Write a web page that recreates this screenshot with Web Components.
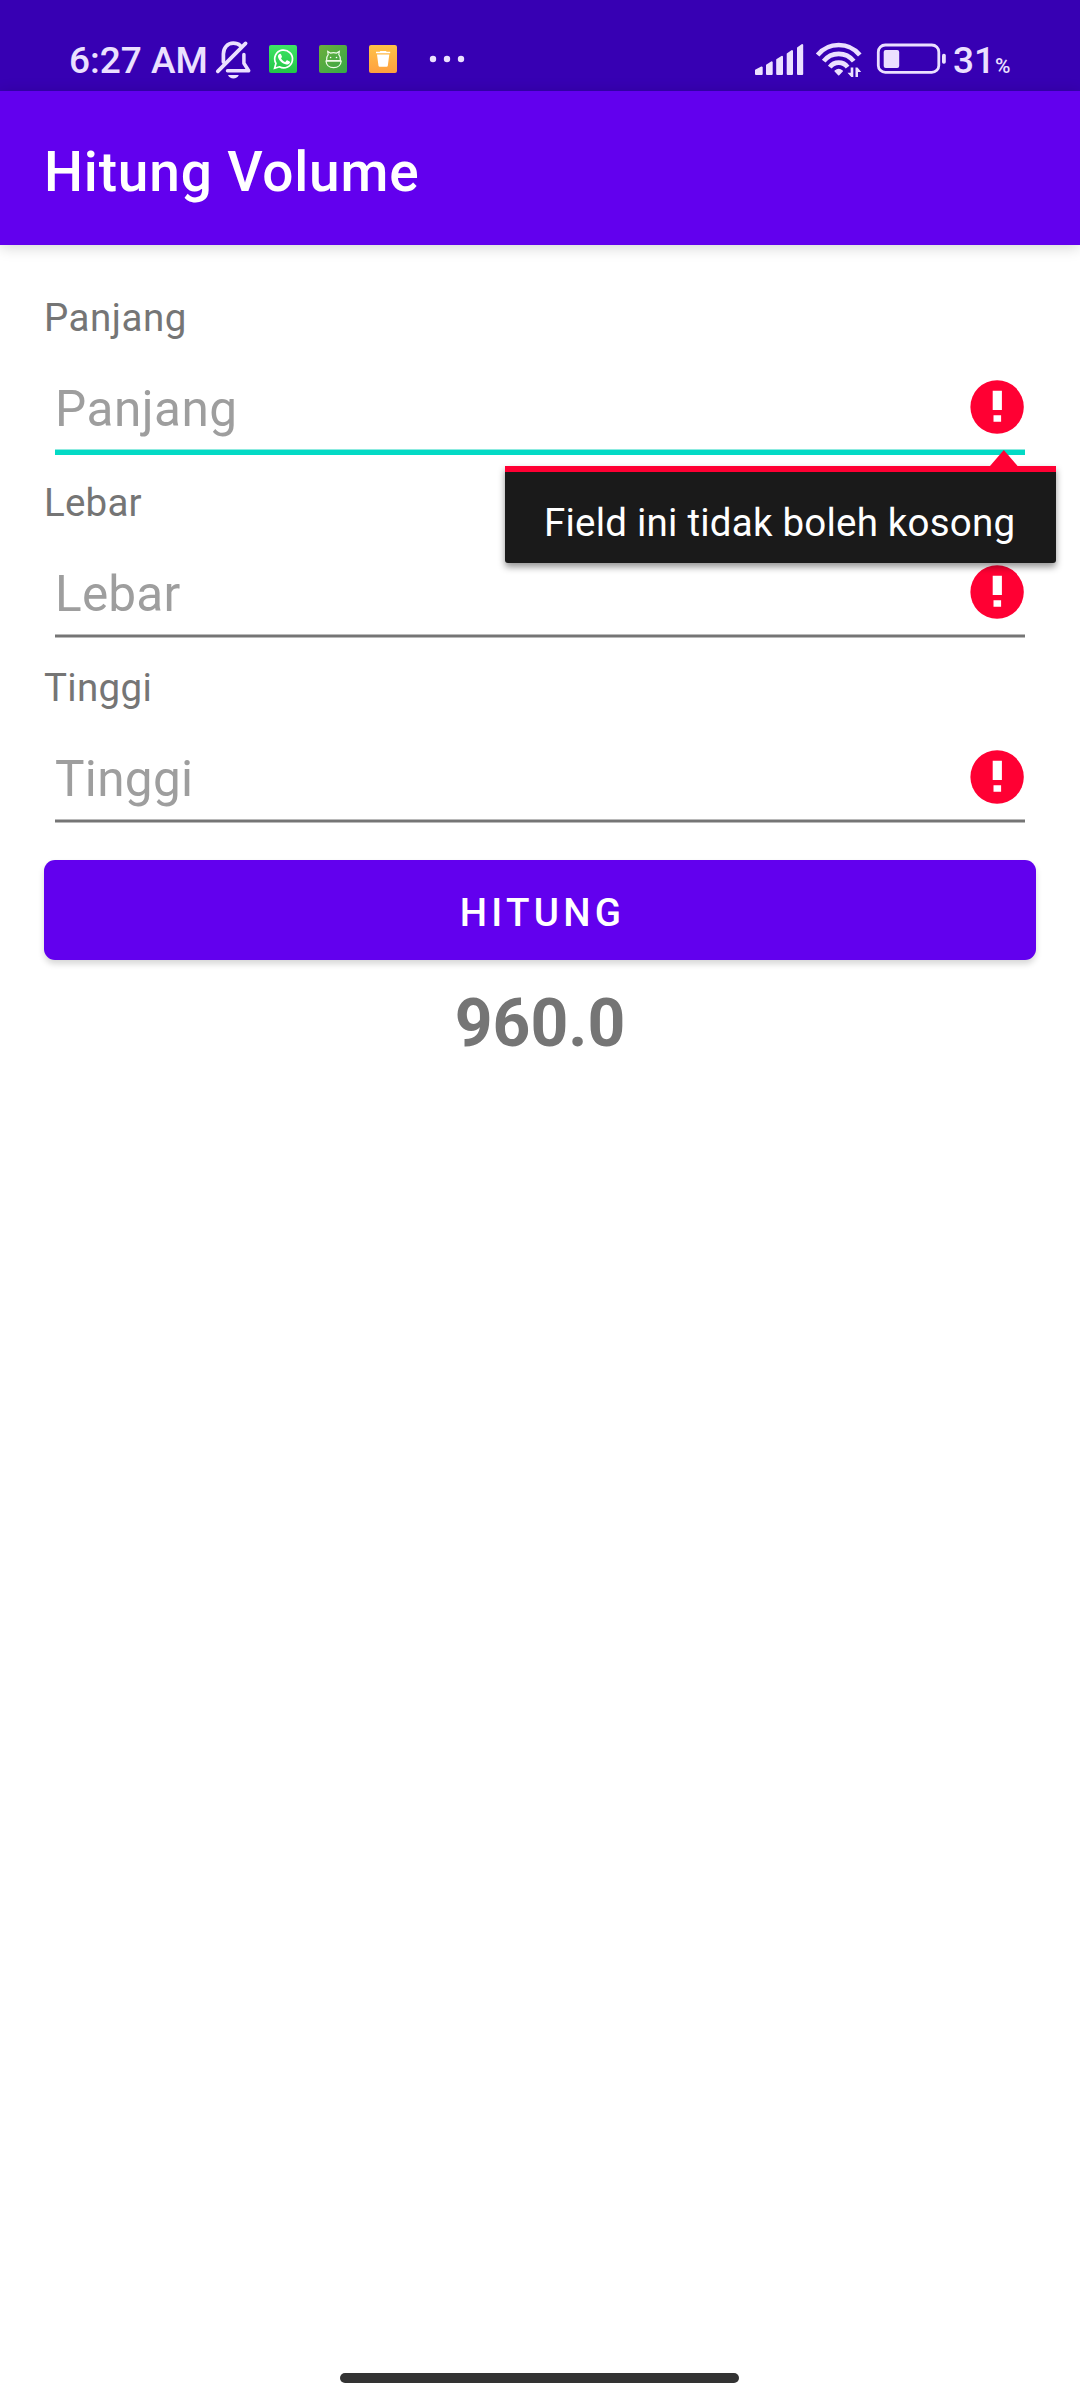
<!DOCTYPE html>
<html lang="id">
<head>
<meta charset="utf-8">
<title>Hitung Volume</title>
<style>
html,body{margin:0;background:#fff;font-family:Roboto,"Liberation Sans",sans-serif}
</style>
</head>
<body>
<volume-screen></volume-screen>
<script>
const define=(name,html)=>customElements.define(name,class extends HTMLElement{
  constructor(){super();this.attachShadow({mode:'open'}).innerHTML=html;}
});

define('status-bar',`
<style>
:host{display:flex;justify-content:space-between;align-items:flex-start;box-sizing:border-box;height:91px;padding:38px 64px 0 69px;background:#3700b3;color:#ebe0ff}
.g{display:flex;align-items:flex-start}
svg{display:block;flex:none}
.t{font-size:37px;line-height:45px;font-weight:500;white-space:nowrap}
.time{width:145px}
.pct{width:63px;margin-left:5px}
small{font-size:21px}
</style>
<div class="g">
<div class="t time">6:27 AM</div>
<svg width="40" height="44" viewBox="214 38 40 44" fill="none" stroke="#ebe0ff" stroke-width="3.7" stroke-linecap="round" stroke-linejoin="round"><path d="M217.8 71.4L245.6 43.4"/><path d="M223.4 62V54C223.4 47.500 227.600 43.200 233.300 43.200C236.300 43.200 238.500 44 240.300 45.600"/><path d="M243.900 54.500V63.200L248.700 70.700H227.500" stroke-width="3.500"/><path d="M228 75h10.800c-.8 2.200-2.900 3.400-5.400 3.400s-4.600-1.200-5.400-3.400z" fill="#ebe0ff" stroke="none"/></svg>
<svg width="43" height="44" viewBox="254 38 43 44"><defs><linearGradient id="w" x2="0" y2="1"><stop stop-color="#3fe565"/><stop offset="1" stop-color="#22c547"/></linearGradient></defs><rect x="269" y="45" width="28" height="28" rx="2" fill="url(#w)"/><path d="M274.600 68.200l1.300-4.800a8.900 8.900 0 1 1 3.500 3.400z" fill="none" stroke="#fff" stroke-width="1.700"/><path d="M279 54.300c.8-.9 1.700-.8 2.100.1l.8 2c.2.600-.2 1-.9 1.800 1 1.900 2.300 3 4.300 3.800l1.200-1.400c.4-.4.7-.4 1.200-.2l1.900 1c.6.300.6.700.3 1.400-.5 1.300-2.100 2-3.600 1.700-4.200-.9-7.200-3.900-8.200-7.300-.2-1.100 0-2.100.9-2.900z" fill="#fff"/></svg>
<svg width="50" height="44" viewBox="297 38 50 44"><defs><linearGradient id="a" x2="1" y2="1"><stop stop-color="#6dae3c"/><stop offset="1" stop-color="#35a847"/></linearGradient></defs><rect x="319" y="45" width="28" height="28" rx="2" fill="url(#a)"/><g fill="none" stroke="#effbe9" stroke-width="1.200"><path d="M326.600 60.500c-.3-2.500.4-4.500 1.600-5.800l-.5-3.200 2.700 1.600c1.800-.6 4.400-.6 6.200 0l2.700-1.600-.5 3.200c1.200 1.300 1.900 3.300 1.600 5.800z"/><path d="M326 61.200h15.200c-.5 4.300-3.500 6.400-7.600 6.400s-7.100-2.100-7.600-6.400z"/></g><circle cx="330.600" cy="57.500" r=".8" fill="#fff"/><circle cx="336.500" cy="57.500" r=".8" fill="#fff"/></svg>
<svg width="50" height="44" viewBox="347 38 50 44"><defs><linearGradient id="o" x2="0" y2="1"><stop stop-color="#ffc247"/><stop offset="1" stop-color="#ffa03f"/></linearGradient></defs><rect x="369" y="45" width="28" height="28" rx="2" fill="url(#o)"/><path d="M376 53.200v-1.500h3.700l.6-.8h5.700l.6.800h3.600v1.500zM377 54.500h12.300l-1.500 11.200c-.1.700-.5 1-1.200 1h-6.900c-.7 0-1.100-.3-1.200-1z" fill="#fff"/></svg>
<svg width="70" height="44" viewBox="397 38 70 44" fill="#ebe0ff"><circle cx="433" cy="59" r="3.200"/><circle cx="447" cy="59" r="3.200"/><circle cx="461" cy="59" r="3.200"/></svg>
</div>
<div class="g">
<svg width="195" height="44" viewBox="753 38 195 44" fill="#ebe0ff">
<g stroke="#ebe0ff" stroke-width="2" stroke-linejoin="round"><path d="M756 70.300l5.700-2.800v6.500H756zM767 65.300l4.700-3v11.700H767zM777.200 59.800l4.800-3v17.200h-4.800zM787.700 54.100l4.300-3v22.900h-4.300zM798 48l4.200-2.900v28.900H798z"/></g>
<g fill="none" stroke="#ebe0ff" stroke-width="4.600"><path d="M817.600 55A27.300 27.300 0 0 1 859.800 55"/><path d="M823.700 61.200A19 19 0 0 1 853.700 61.200"/><path d="M829.800 67.200A11 11 0 0 1 847.600 67.200"/></g>
<path d="M835.200 71c2-1.700 5-1.700 7 0l-3.500 3.600z" stroke="#ebe0ff" stroke-width="1.600" stroke-linejoin="round"/>
<path d="M850.700 67.500h2.600v9.500h-2l-3.800-4.300h3.200zM855.500 77v-9.500h2l3.700 4.500h-3.200v5z"/>
<rect x="878.300" y="45" width="60.500" height="27.400" rx="7" fill="none" stroke="#ebe0ff" stroke-width="2.800"/><rect x="883.700" y="50" width="15.500" height="18" rx="2"/><rect x="942" y="53.700" width="3.800" height="10" rx="1.700"/>
</svg>
<div class="t pct">31<small>%</small></div>
</div>`);

define('app-bar',`
<style>:host{display:flex;align-items:center;box-sizing:border-box;height:154px;padding:7px 44px 0;background:#6200ee;color:#fff;font-size:55px;font-weight:500;letter-spacing:.82px;box-shadow:0 2px 14px rgba(0,0,0,.18);position:relative}</style>
<span><slot></slot></span>`);

define('error-icon',`
<style>:host{display:block;flex:none;width:64px;height:64px}svg{display:block}</style>
<svg width="64" height="64" viewBox="965 374.300 64 64"><circle cx="997.100" cy="406.300" r="26.700" fill="#ff0033"/><path d="M992.700 390h9.200v19.200h-9.200zM993.500 414.500h7.600v6.500h-7.600z" fill="#fff"/></svg>`);

define('error-popup',`
<style>
:host{display:block;width:551px}
svg{display:block;margin-left:485px}
.b{box-sizing:border-box;height:97px;border-top:6px solid #ff0033;border-radius:0 0 3px 3px;background:#1a1a1a;color:#fff;font-size:38.5px;line-height:45px;letter-spacing:.22px;padding:28px 0 0 39px;white-space:nowrap;box-shadow:0 4px 7px rgba(0,0,0,.42)}
</style>
<svg width="28" height="16" viewBox="0 0 28 16"><path d="M0 16L13.800 0L27.600 16z" fill="#ff0033"/></svg>
<div class="b"><span><slot></slot></span></div>`);

customElements.define('number-field',class extends HTMLElement{
  constructor(){
    super();
    const name=this.getAttribute('name');
    this.attachShadow({mode:'open'}).innerHTML=`
<style>
:host{display:block;position:relative;height:185px}
.label{font-size:38.5px;line-height:58px;color:#757575;letter-spacing:var(--track)}
.row{box-sizing:border-box;height:102px;padding:22px 7px 0 11px;display:flex;align-items:center;justify-content:space-between}
.hint{font-size:49.5px;line-height:80px;color:#9e9e9e;letter-spacing:var(--track)}
error-icon{margin-bottom:5px}
.line{margin:0 11px;height:4px;background:linear-gradient(#bababa 1px,#757575 1px 3px,#bababa 3px)}
:host([focused]) .line{height:6px;background:linear-gradient(#8cebe0 1px,#03dac5 1px)}
::slotted(error-popup){position:absolute;z-index:2;left:461px;top:161px}
</style>
<div class="label"><span>${name}</span></div>
<div class="row"><span class="hint">${name}</span><error-icon></error-icon></div>
<div class="line"></div>
<slot></slot>`;
  }
});

define('action-button',`
<style>:host{display:flex;align-items:center;justify-content:center;box-sizing:border-box;height:100px;padding:4px 0 0 5px;border-radius:11px;background:#6200ee;color:#fff;font-size:38.5px;font-weight:500;letter-spacing:4.3px;box-shadow:0 4px 6px rgba(0,0,0,.16)}</style>
<span><slot></slot></span>`);

define('volume-result',`
<style>:host{display:block;text-align:center;font-size:66px;line-height:77px;font-weight:700;color:#757575}</style>
<span><slot></slot></span>`);

define('nav-handle',`
<style>:host{display:block;width:399px;height:10px;border-radius:5px;background:#333}</style>`);

define('volume-screen',`
<style>
:host{display:flex;flex-direction:column;height:2400px;width:1080px;overflow:hidden}
main{flex:1;padding:44px 44px 0}
action-button{margin:16px 0 25px}
nav-handle{margin:0 0 17px 340px}
.p{--track:.5px}.l{--track:.22px}.t{--track:.32px}
</style>
<status-bar></status-bar>
<app-bar>Hitung Volume</app-bar>
<main>
<number-field class="p" name="Panjang" focused><error-popup>Field ini tidak boleh kosong</error-popup></number-field>
<number-field class="l" name="Lebar"></number-field>
<number-field class="t" name="Tinggi"></number-field>
<action-button>HITUNG</action-button>
<volume-result>960.0</volume-result>
</main>
<nav-handle></nav-handle>`);
</script>
</body>
</html>
